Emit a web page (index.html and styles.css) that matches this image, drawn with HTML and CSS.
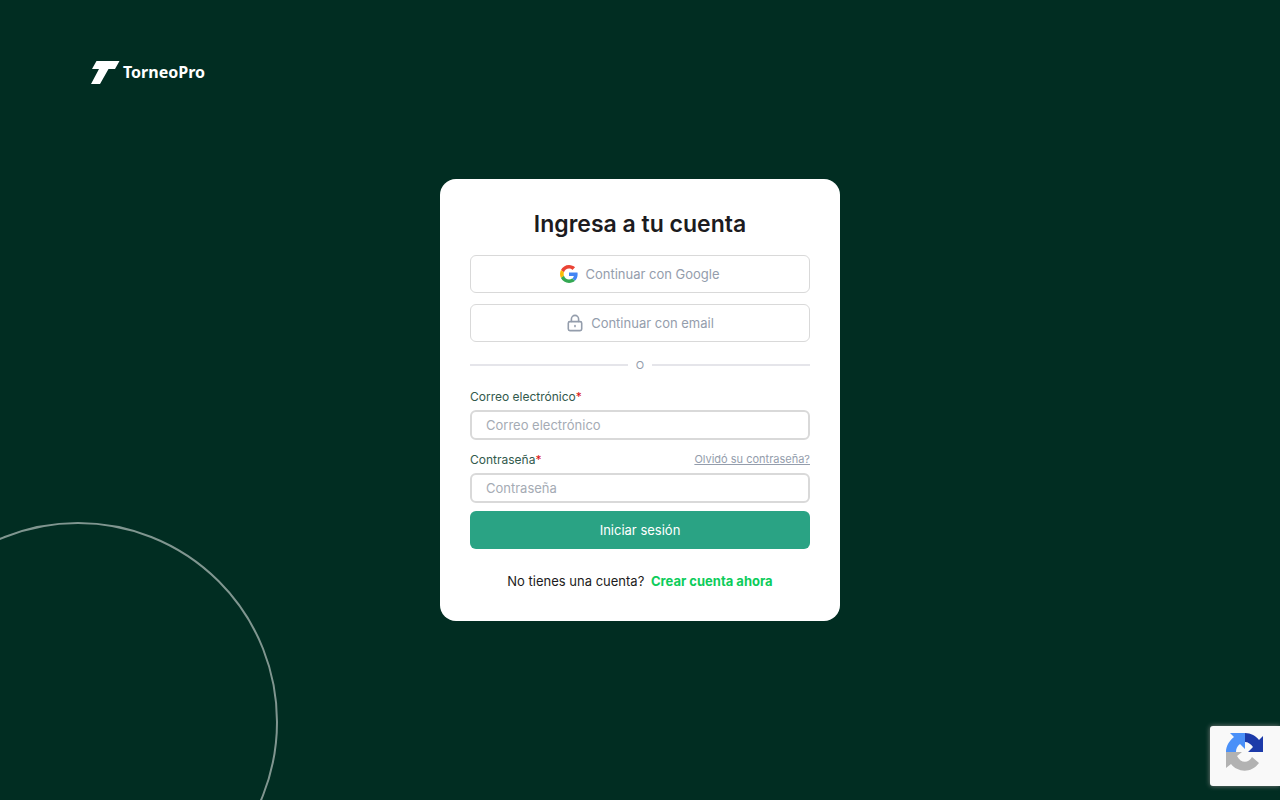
FILE: index.html
```html
<!DOCTYPE html>
<html lang="es">
<head>
  <meta charset="UTF-8">
  <meta name="viewport" content="width=device-width, initial-scale=1.0">
  <title>TorneoPro - Ingresar</title>
  <link rel="stylesheet" href="styles.css">
</head>
<body>
  <svg class="circle" width="278" height="278" viewBox="0 0 278 278" fill="none" stroke="#809690" stroke-width="2" aria-hidden="true">
    <circle cx="78" cy="200" r="199"/>
  </svg>

  <header class="header">
    <a href="#" class="logo">
      <svg width="29" height="23" viewBox="0 0 29 23" fill="#fff" aria-hidden="true">
        <path d="M5.5 0H28.5L24 8H17.5L9 23H0L8 8H1Z"/>
      </svg>
      <span>TorneoPro</span>
    </a>
  </header>

  <main class="card">
    <h1>Ingresa a tu cuenta</h1>

    <div class="social">
      <button type="button" class="btn btn-outline">
        <svg width="18" height="18" viewBox="0 0 48 48" aria-hidden="true">
          <path fill="#EA4335" d="M24 9.5c3.54 0 6.71 1.22 9.21 3.6l6.85-6.85C35.9 2.38 30.47 0 24 0 14.62 0 6.51 5.38 2.56 13.22l7.98 6.19C12.43 13.72 17.74 9.5 24 9.5z"/>
          <path fill="#4285F4" d="M46.98 24.55c0-1.57-.15-3.09-.38-4.55H24v9.02h12.94c-.58 2.96-2.26 5.48-4.78 7.18l7.73 6c4.51-4.18 7.09-10.36 7.09-17.65z"/>
          <path fill="#FBBC05" d="M10.53 28.59c-.48-1.45-.76-2.99-.76-4.59s.27-3.14.76-4.59l-7.98-6.19C.92 16.46 0 20.12 0 24c0 3.88.92 7.54 2.56 10.78l7.97-6.19z"/>
          <path fill="#34A853" d="M24 48c6.48 0 11.93-2.13 15.89-5.81l-7.73-6c-2.15 1.45-4.92 2.3-8.16 2.3-6.26 0-11.57-4.22-13.47-9.91l-7.98 6.19C6.51 42.62 14.62 48 24 48z"/>
        </svg>
        Continuar con Google
      </button>
      <button type="button" class="btn btn-outline">
        <svg width="18" height="18" viewBox="0 0 18 18" fill="none" stroke="#949dac" stroke-width="1.6" stroke-linecap="round" aria-hidden="true">
          <rect x="2.3" y="7.6" width="13.4" height="9" rx="1.6"/>
          <path d="M5.4 7.4V5a3.6 3.6 0 0 1 7.2 0V7.4M9 11.6v1"/>
        </svg>
        Continuar con email
      </button>
    </div>

    <div class="divider"><span>O</span></div>

    <form class="login-form">
      <div class="field">
        <label for="email">Correo electrónico<span class="required">*</span></label>
        <input type="email" id="email" placeholder="Correo electrónico">
      </div>
      <div class="field">
        <div class="label-row">
          <label for="password">Contraseña<span class="required">*</span></label>
          <a href="#" class="forgot">Olvidó su contraseña?</a>
        </div>
        <input type="password" id="password" placeholder="Contraseña">
      </div>
      <button type="submit" class="btn btn-primary">Iniciar sesión</button>
    </form>

    <p class="signup">No tienes una cuenta? <a href="#">Crear cuenta ahora</a></p>
  </main>

  <div class="recaptcha">
    <svg width="38" height="38" viewBox="0 0 38 38" aria-label="reCAPTCHA" role="img">
      <path fill="#1c3aa9" d="M19 0C25 0 30 3 33 7L37 3V19H22L27 14C25 11 22 9 19 9Z"/>
      <path fill="#4a90f8" d="M19 0H4L8 4C3 8 0 13 0 19H10C10 16 11 13 14 11L19 16Z"/>
      <path fill="#b2b2b2" d="M0 19H16L11 23C15 31 23 30 26 24L33 30C25 41 11 39 5 31L0 35Z"/>
    </svg>
  </div>
</body>
</html>
```

FILE: styles.css
```css
* {
  box-sizing: border-box;
}
body {
  margin: 0;
  min-height: 100vh;
  display: grid;
  grid-template-rows: 1fr auto 1fr;
  justify-items: center;
  position: relative;
  background-color: #012d22;
  font-family: Inter, "Liberation Sans", sans-serif;
  font-size: 13px;
  color: #1c1b20;
}
.circle {
  position: absolute;
  left: 0;
  bottom: 0;
}
.header {
  width: 100%;
  padding: 60px 91px;
}
.logo {
  display: inline-flex;
  align-items: center;
  gap: 3px;
  color: #fff;
  font-family: "Noto Sans", sans-serif;
  font-size: 16px;
  font-weight: 700;
  line-height: 24px;
  text-decoration: none;
}
.card {
  position: relative;
  width: 100%;
  max-width: 400px;
  padding: 30px;
  background-color: #fff;
  border-radius: 16px;
}
h1 {
  margin: 0 0 16px;
  font-size: 23px;
  font-weight: 600;
  line-height: 30px;
  text-align: center;
}
.social {
  display: flex;
  flex-direction: column;
  gap: 11px;
}
.btn {
  display: flex;
  align-items: center;
  justify-content: center;
  gap: 7px;
  width: 100%;
  height: 38px;
  border: none;
  border-radius: 6px;
  font-family: inherit;
  font-size: 13px;
  cursor: pointer;
}
.btn-outline {
  background-color: #fff;
  border: 1px solid #d9d9d9;
  color: #949dac;
}
.btn-primary {
  background-color: #2aa384;
  color: #fff;
}
.divider {
  display: flex;
  align-items: center;
  gap: 8px;
  height: 46px;
  color: #949dac;
  font-size: 11px;
}
.divider::before,
.divider::after {
  content: "";
  flex: 1;
  height: 2px;
  background-color: #e5e5ea;
}
.field {
  margin-bottom: 11px;
}
.field:nth-child(2) {
  margin-bottom: 8px;
}
label {
  display: block;
  margin-bottom: 4px;
  color: #32594c;
  font-size: 12px;
  line-height: 18px;
}
.required {
  color: #d91414;
}
.label-row {
  display: flex;
  justify-content: space-between;
}
.forgot {
  color: #949dac;
  font-size: 11px;
  line-height: 16px;
}
input {
  display: block;
  width: 100%;
  height: 30px;
  padding: 0 14px;
  border: 2px solid #d9d9d9;
  border-radius: 6px;
  font-family: inherit;
  font-size: 13px;
}
input::placeholder {
  color: #a5abb4;
}
.signup {
  margin: 22px 0 0;
  line-height: 20px;
  text-align: center;
}
.signup a {
  margin-left: 3px;
  color: #0dcc5b;
  font-weight: 700;
  text-decoration: none;
}
.recaptcha {
  position: absolute;
  right: 0;
  bottom: 14px;
  width: 70px;
  height: 60px;
  padding: 7px 16px;
  background-color: #f9f9f9;
  border-radius: 3px 0 0 3px;
  box-shadow: 0 0 5px #808080;
}
```
